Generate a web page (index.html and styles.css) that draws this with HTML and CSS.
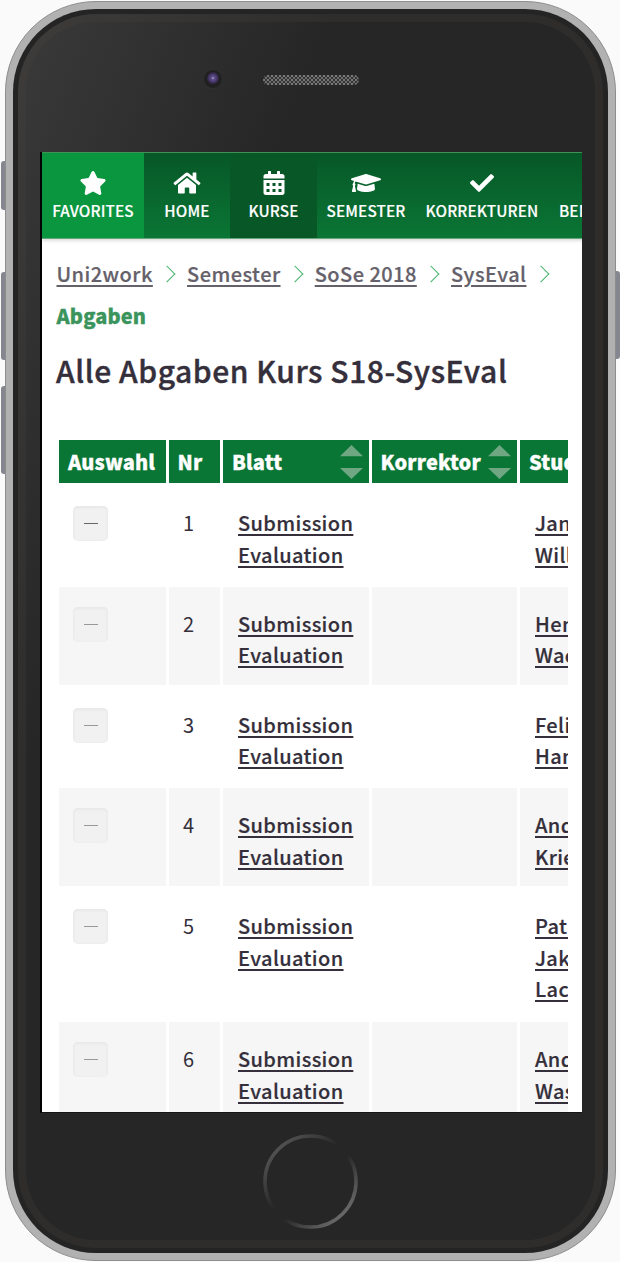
FILE: index.html
```html
<!DOCTYPE html>
<html lang="de">
<head>
<meta charset="utf-8">
<title>Alle Abgaben Kurs S18-SysEval</title>
<link rel="stylesheet" href="styles.css">
</head>
<body>
<div class="device">
  <span class="side-button mute"></span>
  <span class="side-button volume-up"></span>
  <span class="side-button volume-down"></span>
  <span class="side-button power"></span>
  <div class="bezel">
    <div class="glass">
      <div class="top-bar">
        <span class="camera"></span>
        <svg class="speaker" width="96" height="10" viewBox="0 0 96 10">
          <defs><pattern id="mesh" width="4" height="4" patternUnits="userSpaceOnUse"><rect width="4" height="4" fill="#353535"/><rect width="2" height="2" fill="#777"/><rect x="2" y="2" width="2" height="2" fill="#6c6c6c"/></pattern></defs>
          <rect width="96" height="10" rx="5" fill="url(#mesh)"/>
        </svg>
      </div>
      <main class="screen">
        <nav class="navbar">
          <a class="nav-item favorites"><svg class="icon" viewBox="0 0 576 512"><path d="M259.3 17.8 194 150.200 47.900 171.500c-26.200 3.800-36.700 36.100-17.700 54.600l105.700 103-25 145.500c-4.500 26.300 23.200 46 46.400 33.700L288 439.600l130.700 68.700c23.200 12.200 50.900-7.400 46.400-33.700l-25-145.500 105.700-103c19-18.500 8.500-50.800-17.700-54.600L382 150.200 316.700 17.800c-11.700-23.600-45.600-23.900-57.400 0z"/></svg><span>FAVORITES</span></a>
          <a class="nav-item home"><svg class="icon" viewBox="0 0 576 512"><path d="M280.400 148.300 96 300.100V464a16 16 0 0 0 16 16l112-.3a16 16 0 0 0 16-16V368a16 16 0 0 1 16-16h64a16 16 0 0 1 16 16v95.600a16 16 0 0 0 16 16.100L464 480a16 16 0 0 0 16-16V300L295.700 148.300a12.200 12.200 0 0 0-15.300 0zM571.600 251.500 488 182.600V44a12 12 0 0 0-12-12h-56a12 12 0 0 0-12 12v72.600L318.500 43a48 48 0 0 0-61 0L4.300 251.500a12 12 0 0 0-1.600 16.900l25.500 31a12 12 0 0 0 16.900 1.600L280.400 107.200a12.200 12.200 0 0 1 15.300 0L531 301a12 12 0 0 0 16.900-1.600l25.500-31a12 12 0 0 0-1.800-16.900z"/></svg><span>HOME</span></a>
          <a class="nav-item current"><svg class="icon" viewBox="0 0 448 512"><path fill-rule="evenodd" d="M0 160V112c0-26.500 21.500-48 48-48h48V12c0-6.600 5.400-12 12-12h40c6.600 0 12 5.400 12 12v52h128V12c0-6.600 5.400-12 12-12h40c6.600 0 12 5.400 12 12v52h48c26.500 0 48 21.500 48 48v48H0zm0 32h448v272c0 26.500-21.500 48-48 48H48c-26.500 0-48-21.500-48-48zM64 256v64h64v-64zm128 0v64h64v-64zm128 0v64h64v-64zM64 384v64h64v-64zm128 0v64h64v-64zm128 0v64h64v-64z"/></svg><span>KURSE</span></a>
          <a class="nav-item semester"><svg class="icon" viewBox="0 0 640 512"><path d="M622.300 153.200 343.400 67.500c-15.200-4.700-31.600-4.700-46.800 0L17.700 153.200c-23.600 7.200-23.600 38.400 0 45.600l48.600 14.900c-10.600 13.200-17.200 29.200-17.800 46.900A31.800 31.800 0 0 0 32 288c0 10.800 5.700 19.900 14 25.700L20.500 428.500A16 16 0 0 0 36.100 448h55.800a16 16 0 0 0 15.600-19.500L82 313.700A31.500 31.500 0 0 0 96 288c0-11.600-6.600-21.200-15.900-26.800a47 47 0 0 1 18.700-37.500l197.800 60.800c8.100 2.500 25.500 7 46.800 0l278.900-85.700c23.600-7.200 23.600-38.400 0-45.600zM352.800 315.100c-28.500 8.800-52.100 4.200-65.600 0l-145-44.600L128 384c0 35.300 86 64 192 64s192-28.700 192-64l-14.200-113.500z"/></svg><span>SEMESTER</span></a>
          <a class="nav-item corrections"><svg class="icon" viewBox="0 0 512 512"><path d="m173.900 439.400-166.400-166.400a25.600 25.600 0 0 1 0-36.200l36.200-36.200a25.600 25.600 0 0 1 36.200 0L192 312.700 432.100 72.600a25.600 25.600 0 0 1 36.200 0l36.200 36.200a25.600 25.600 0 0 1 0 36.200L210.100 439.400a25.600 25.600 0 0 1-36.200 0z"/></svg><span>KORREKTUREN</span></a>
          <a class="nav-item users"><span>BENUTZER</span></a>
        </nav>
        <section class="content">
          <div class="breadcrumbs">
            <a>Uni2work</a><i></i><a>Semester</a><i></i><a>SoSe 2018</a><i></i><a>SysEval</a><i></i><b>Abgaben</b>
          </div>
          <h1>Alle Abgaben Kurs S18-SysEval</h1>
          <div class="table">
            <div class="row head"><div>Auswahl</div><div>Nr</div><div>Blatt<span class="sort"></span></div><div>Korrektor<span class="sort"></span></div><div>Studierende</div></div>
            <div class="row"><div><span class="check strong"></span></div><div>1</div><div><a>Submission Evaluation</a></div><div></div><div><a>Jan<br>Will</a></div></div>
            <div class="row"><div><span class="check"></span></div><div>2</div><div><a>Submission Evaluation</a></div><div></div><div><a>Hen<br>Wac</a></div></div>
            <div class="row"><div><span class="check"></span></div><div>3</div><div><a>Submission Evaluation</a></div><div></div><div><a>Felix<br>Han</a></div></div>
            <div class="row"><div><span class="check"></span></div><div>4</div><div><a>Submission Evaluation</a></div><div></div><div><a>And<br>Krie</a></div></div>
            <div class="row tall"><div><span class="check"></span></div><div>5</div><div><a>Submission Evaluation</a></div><div></div><div><a>Patr<br>Jako<br>Lack</a></div></div>
            <div class="row"><div><span class="check"></span></div><div>6</div><div><a>Submission Evaluation</a></div><div></div><div><a>And<br>Was</a></div></div>
          </div>
        </section>
      </main>
      <div class="bottom-bar"><svg width="96" height="96" viewBox="0 0 96 96"><defs><linearGradient id="ring" x1="0" y1="0" x2="1" y2="1"><stop offset=".1" stop-color="#555"/><stop offset=".45" stop-color="#262626"/><stop offset=".56" stop-color="#262626"/><stop offset=".9" stop-color="#707070"/></linearGradient></defs><circle cx="48.500" cy="48.500" r="45.500" fill="none" stroke="url(#ring)" stroke-width="3.500"/></svg></div>
    </div>
  </div>
</div>
</body>
</html>
```
FILE: styles.css
```css
* { box-sizing: border-box; }
body { margin: 0; width: 620px; height: 1262px; overflow: hidden; background: #fafafa; font-family: "Noto Sans CJK SC", "Noto Sans", sans-serif; color: #342f3b; }
.device { position: relative; width: 611px; height: 1260px; margin: 1px 0 0 5px; padding: 7px; border: 1px solid #8d8d8d; border-radius: 91px; background: #b1b1b1; }
.side-button { position: absolute; width: 4px; background: #858690; border-radius: 3px 0 0 3px; }
.mute { left: -5px; top: 159px; height: 49px; }
.volume-up { left: -5px; top: 270px; height: 88px; }
.volume-down { left: -5px; top: 384px; height: 88px; }
.power { right: -5px; top: 269px; height: 88px; border-radius: 0 3px 3px 0; }
.bezel { height: 100%; padding: 5px; border-radius: 83px; background: #242424; }
.glass { height: 100%; border: 8px solid rgba(70,69,62,.25); border-radius: 78px; background: linear-gradient(112deg, #3a3a3a 0, #262626 29%) border-box; display: flex; flex-direction: column; padding: 0 0 0 15px; }
.top-bar { height: 130px; flex: none; display: flex; align-items: flex-start; padding: 47px 0 0 162px; }
.camera { width: 20px; height: 20px; margin-right: 40px; border-radius: 50%; border: 1px solid #303030; background: radial-gradient(circle at 50% 45%, #b4a9cd 0, #60508c 1.500px, #46366a 4px, #30263f 5.500px, #202020 6.500px); }
.speaker { margin-top: 6px; }
.screen { flex: none; width: 542px; height: 961px; border-left: 2px solid #000; border-bottom: 1px solid #151515; background: #fff; overflow: hidden; margin-left: -1px; }
.navbar { display: flex; height: 87px; width: 700px; background: linear-gradient(#075727, #0a7635); border-top: 1px solid #3f9156; border-bottom: 1px solid #66a77b; box-shadow: 0 1px 4px rgba(0,0,0,.2); }
.nav-item { flex: none; display: flex; flex-direction: column; align-items: center; color: #fff; font-size: 15.300px; font-weight: 500; line-height: 22px; letter-spacing: .14px; -webkit-text-stroke: .15px; padding-top: 18px; }
.nav-item span { margin-top: 4px; white-space: nowrap; }
.icon { height: 24px; width: 32px; fill: #fff; }
.favorites { width: 102px; background: #0a953f; }
.home { width: 86px; }
.current { width: 87px; background: #085727; }
.semester { width: 98px; }
.corrections { width: 134px; }
.users { padding: 46px 0 0 10px; align-items: flex-start; }
.users span { margin-top: 0; }
.content { padding: 14px 14px 0; }
.breadcrumbs { display: flex; flex-wrap: wrap; align-items: center; font-size: 20px; line-height: 42px; height: 84px; font-weight: 500; letter-spacing: .45px; color: #65616a; padding-left: .5px; }
.breadcrumbs a, .row a { text-decoration: underline; text-decoration-thickness: 1.500px; text-underline-offset: 2.500px; -webkit-text-stroke: .2px; }
.breadcrumbs i { width: 12px; height: 12px; border-top: 1.500px solid #4bb570; border-right: 1.500px solid #4bb570; transform: rotate(45deg); margin: 0 14px 0 8.200px; }
.breadcrumbs b { color: #3c945d; font-weight: 900; letter-spacing: .15px; -webkit-text-stroke: .3px; }
h1 { margin: 13px 0 0; font-size: 30px; line-height: 40px; font-weight: 500; letter-spacing: .55px; -webkit-text-stroke: .4px; white-space: nowrap; }
.table { margin: 50px 0 0 3px; display: flex; flex-direction: column; gap: 3px; overflow: hidden; }
.row { display: grid; grid-template-columns: 107px 51px 146px 145px 200px; grid-template-rows: 100%; gap: 3px; height: 97.750px; font-size: 20px; line-height: 31.700px; width: 806px; flex: none; }
.row > div { padding: 21px 15px 0; background: #fff; }
.row > div:first-child { padding-left: 14px; }
.row > div:nth-child(2) { padding-left: 14px; }
.row a { font-weight: 500; letter-spacing: .38px; }
.row:nth-child(odd) > div { background: #f6f6f6; }
.row.tall { height: 130px; }
.row.tall > div { background: #fff; }
.row:nth-child(even) > div { background: #fff; }
.row.head { height: 43px; }
.row.head > div { background: #0a7635; color: #fff; font-weight: 900; padding: 6px 9px; letter-spacing: .15px; -webkit-text-stroke: .3px; display: flex; justify-content: space-between; }
.row.head > div:nth-child(n+2):nth-child(even) { padding-left: 8.500px; }
.sort { width: 23px; margin: -1px -3px 0 0; height: 34px; flex: none; background: #6fa783; clip-path: polygon(50% 0,100% 33%,0 33%,50% 0,50% 100%,100% 68%,0 68%,50% 100%); }
.check { display: flex; align-items: center; justify-content: center; width: 35px; height: 35px; margin-top: -1px; background: #f1f1f1; box-shadow: inset 0 1px 2px 1px #e8e8e8; border-radius: 5px; }
.check::before { content: ""; width: 14px; height: 1px; background: #999; }
.check.strong::before { background: #666; }
.bottom-bar { display: flex; padding: 20px 0 0 221px; }
```
